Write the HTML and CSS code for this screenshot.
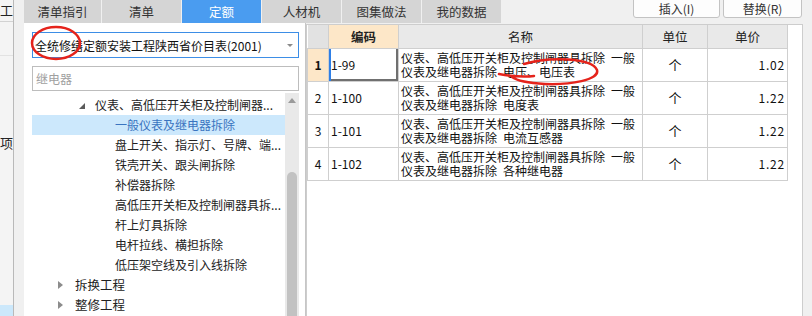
FILE: index.html
```html
<!DOCTYPE html>
<html lang="zh-CN">
<head>
    <meta charset="UTF-8">
    <title>定额</title>
    <link rel="stylesheet" href="styles.css">
</head>
<body>
<div class="app">
    <aside class="strip">
        <div class="strip-head">工程</div>
        <div class="strip-sub"></div>
        <div class="strip-item">项目</div>
        <div class="strip-sel"></div>
    </aside>

    <div class="main">
        <div class="topbar">
            <div class="tabs">
                <div class="tab first">清单指引</div>
                <div class="tab">清单</div>
                <div class="tab active">定额</div>
                <div class="tab">人材机</div>
                <div class="tab">图集做法</div>
                <div class="tab">我的数据</div>
            </div>
            <div class="actions">
                <button class="btn wide">插入(I)</button>
                <button class="btn">替换(R)</button>
            </div>
        </div>

        <div class="content">
            <section class="left-panel">
                <div class="select">
                    <span>全统修缮定额安装工程陕西省价目表(2001)</span>
                    <i class="caret"></i>
                </div>
                <div class="search">继电器</div>

                <div class="tree-wrap">
                    <ul class="tree">
                        <li class="node lv2"><i class="tri open"></i><span>仪表、高低压开关柜及控制闸器...</span></li>
                        <li class="node lv3 selected"><span>一般仪表及继电器拆除</span></li>
                        <li class="node lv3"><span>盘上开关、指示灯、号牌、端...</span></li>
                        <li class="node lv3"><span>铁壳开关、跟头闸拆除</span></li>
                        <li class="node lv3"><span>补偿器拆除</span></li>
                        <li class="node lv3"><span>高低压开关柜及控制闸器具拆...</span></li>
                        <li class="node lv3"><span>杆上灯具拆除</span></li>
                        <li class="node lv3"><span>电杆拉线、横担拆除</span></li>
                        <li class="node lv3"><span>低压架空线及引入线拆除</span></li>
                        <li class="node lv1"><i class="tri closed"></i><span>拆换工程</span></li>
                        <li class="node lv1"><i class="tri closed"></i><span>整修工程</span></li>
                    </ul>
                    <div class="scrollbar">
                        <i class="up"></i>
                        <span class="thumb"></span>
                    </div>
                </div>
            </section>

            <section class="right-panel">
                <table class="grid">
                    <colgroup>
                        <col class="c-no">
                        <col class="c-code">
                        <col class="c-name">
                        <col class="c-unit">
                        <col class="c-price">
                    </colgroup>
                    <thead>
                        <tr>
                            <th class="no"></th>
                            <th class="hl">编码</th>
                            <th>名称</th>
                            <th>单位</th>
                            <th>单价</th>
                        </tr>
                    </thead>
                    <tbody>
                        <tr>
                            <td class="no hl">1</td>
                            <td class="code focus">1-99</td>
                            <td class="name">仪表、高低压开关柜及控制闸器具拆除&ensp;一般<br>仪表及继电器拆除&ensp;电压、电压表</td>
                            <td class="unit">个</td>
                            <td class="price">1.02</td>
                        </tr>
                        <tr>
                            <td class="no">2</td>
                            <td class="code">1-100</td>
                            <td class="name">仪表、高低压开关柜及控制闸器具拆除&ensp;一般<br>仪表及继电器拆除&ensp;电度表</td>
                            <td class="unit">个</td>
                            <td class="price">1.22</td>
                        </tr>
                        <tr>
                            <td class="no">3</td>
                            <td class="code">1-101</td>
                            <td class="name">仪表、高低压开关柜及控制闸器具拆除&ensp;一般<br>仪表及继电器拆除&ensp;电流互感器</td>
                            <td class="unit">个</td>
                            <td class="price">1.22</td>
                        </tr>
                        <tr>
                            <td class="no">4</td>
                            <td class="code">1-102</td>
                            <td class="name">仪表、高低压开关柜及控制闸器具拆除&ensp;一般<br>仪表及继电器拆除&ensp;各种继电器</td>
                            <td class="unit">个</td>
                            <td class="price">1.22</td>
                        </tr>
                    </tbody>
                </table>
            </section>
        </div>
    </div>

    <!-- red hand-drawn marks on top of the screenshot -->
    <svg class="marks" width="812" height="316" viewBox="0 0 812 316">
        <ellipse cx="56" cy="43" rx="24" ry="16" fill="none" stroke="#e5231b" stroke-width="2.5"/>
        <path d="M499 74 C 510 76, 526 77, 534 76 M 524 64 C 550 56, 592 58, 597 70 C 600 80, 570 85, 545 84 C 528 83, 516 80, 512 77" fill="none" stroke="#e5231b" stroke-width="2.5" stroke-linecap="round"/>
    </svg>
</div>
</body>
</html>
```

FILE: styles.css
```css
* {
    margin: 0;
    padding: 0;
    box-sizing: border-box;
}

body {
    font-family: "Noto Sans CJK SC", "Noto Sans", sans-serif;
    font-size: 12px;
    color: #222;
    background: #f0f0f0;
    width: 812px;
    height: 316px;
    overflow: hidden;
}

.app {
    position: relative;
    display: flex;
    height: 316px;
}

/* left narrow strip (cut off project tree) */
.strip {
    width: 14px;
    border-right: 1px solid #b9b9b9;
    background: #f4f4f4;
    overflow: hidden;
    display: flex;
    flex-direction: column;
}

.strip-head {
    height: 22px;
    line-height: 20px;
    font-size: 13px;
    white-space: nowrap;
    border-bottom: 1px solid #d2d2d2;
}

.strip-sub {
    height: 34px;
    border-bottom: 1px solid #e2e2e2;
}

.strip-item {
    margin-top: 79px;
    font-size: 13px;
    line-height: 16px;
    white-space: nowrap;
}

.strip-sel {
    margin-top: auto;
    height: 11px;
    background: #cce8fb;
}

.main {
    margin-left: 10px;
    flex: 1;
    display: flex;
    flex-direction: column;
}

/* tabs */
.topbar {
    height: 23px;
    display: flex;
}

.tabs {
    display: flex;
    gap: 1px;
}

.tab {
    width: 79px;
    height: 23px;
    line-height: 23px;
    text-align: center;
    background: #d5d5d5;
    color: #333;
    font-size: 12.5px;
}

.tab.first {
    width: 77px;
}

.tab.active {
    background: #4a9cf0;
    color: #fff;
}

.actions {
    margin-left: auto;
    margin-right: 10px;
    display: flex;
    gap: 3px;
}

.btn {
    width: 79px;
    height: 19px;
    margin-top: -1px;
    border: 1px solid #c3c3c3;
    border-radius: 0 0 3px 3px;
    background: #fdfdfd;
    color: #333;
    font-family: inherit;
    font-size: 12px;
    line-height: 16px;
}

.btn.wide {
    width: 87px;
}

.content {
    flex: 1;
    display: flex;
}

/* left panel */
.left-panel {
    width: 282px;
    background: #fff;
    border-right: 1px solid #c6c6c6;
    padding: 9px 6px 0 8px;
    display: flex;
    flex-direction: column;
}

.select {
    height: 26px;
    border: 1px solid #3d8ee6;
    display: flex;
    align-items: center;
    padding-left: 2px;
    white-space: nowrap;
    color: #111;
}

.caret {
    margin-left: auto;
    margin-right: 5px;
    width: 0;
    height: 0;
    border-left: 3px solid transparent;
    border-right: 3px solid transparent;
    border-top: 3px solid #8a8a8a;
}

.search {
    height: 25px;
    margin-top: 8px;
    border: 1px solid #bdbdbd;
    padding-left: 3px;
    line-height: 23px;
    color: #a0a0a0;
}

.tree-wrap {
    flex: 1;
    margin-top: 2px;
    display: flex;
    overflow: hidden;
}

.tree {
    list-style: none;
    width: 253px;
    padding-top: 2px;
}

.node {
    height: 20px;
    line-height: 20px;
    display: flex;
    align-items: center;
    white-space: nowrap;
}

.node.lv1 { padding-left: 26px; font-size: 12.5px; }
.node.lv2 { padding-left: 47px; }
.node.lv3 { padding-left: 83px; }

.node.selected {
    background: #cce8fc;
    color: #3a74c0;
}

.tri {
    width: 0;
    height: 0;
    flex-shrink: 0;
}

.tri.open {
    border-left: 6px solid transparent;
    border-bottom: 6px solid #5b5b5b;
    margin-right: 10px;
    margin-top: 2px;
}

.tri.closed {
    border-top: 4px solid transparent;
    border-bottom: 4px solid transparent;
    border-left: 5px solid #8c8c8c;
    margin-right: 12px;
}

.scrollbar {
    width: 14px;
    background: #e9e9e9;
    display: flex;
    flex-direction: column;
    align-items: center;
}

.scrollbar .up {
    margin-top: 5px;
    width: 0;
    height: 0;
    border-left: 4px solid transparent;
    border-right: 4px solid transparent;
    border-bottom: 5px solid #9a9a9a;
}

.scrollbar .thumb {
    margin-top: 69px;
    width: 10px;
    flex: 1;
    background: #c2c2c2;
    border-radius: 5px 5px 0 0;
}

/* right panel */
.right-panel {
    width: 497px;
    margin-top: 1px;
    background: #fff;
    border: 1px solid #cdcdcd;
    border-bottom: none;
}

.grid {
    border-collapse: collapse;
    table-layout: fixed;
    width: 480px;
}

.c-no { width: 21px; }
.c-code { width: 70px; }
.c-name { width: 244px; }
.c-unit { width: 65px; }
.c-price { width: 80px; }

.grid th,
.grid td {
    border: 1px solid #cfcfcf;
    font-weight: normal;
}

.grid th {
    height: 23px;
    background: #e9e9e9;
    color: #222;
    font-size: 12.5px;
}

.grid th.no {
    background: #e2e2e2;
    border-top: none;
    border-left: none;
}

.grid thead th {
    border-top: none;
}

.grid td {
    height: 33px;
    color: #111;
}

.grid td.no {
    text-align: center;
}

.grid .hl {
    background: #fde7c8;
    font-weight: bold;
}

.grid td.code {
    padding-left: 2px;
}

.grid td.focus {
    box-shadow: inset 2px 0 0 #2e7fe6, inset -2px -2px 0 #707070;
}

.grid td.name {
    padding-left: 2px;
    line-height: 14px;
    white-space: nowrap;
}

.grid td.unit {
    text-align: center;
    font-size: 13px;
}

.grid td.price {
    text-align: right;
    padding-right: 2px;
    letter-spacing: 0.8px;
}

.marks {
    position: absolute;
    top: 0;
    left: 0;
    pointer-events: none;
}
```
